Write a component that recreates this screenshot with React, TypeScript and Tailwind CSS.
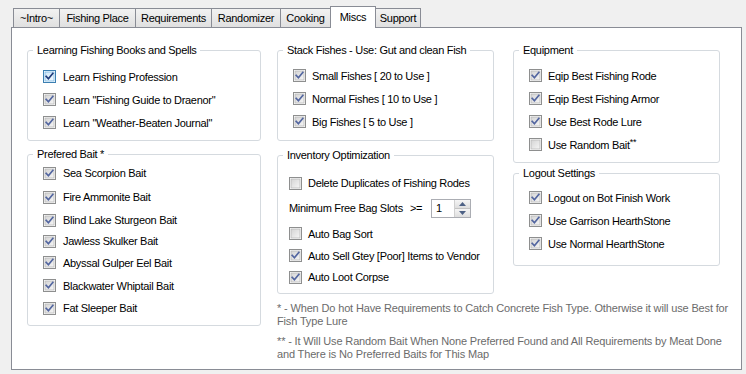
import React from "react";

const tabs = [
  { name: "~Intro~", w: "w-[47px]" },
  { name: "Fishing Place", w: "w-[77px]" },
  { name: "Requirements", w: "w-[77px]" },
  { name: "Randomizer", w: "w-[70px]" },
  { name: "Cooking", w: "w-[51px]" },
  { name: "Miscs", w: "w-[46px]", active: true },
  { name: "Support", w: "w-[46px]" },
];

function Check({ on = true, focus = false }: { on?: boolean; focus?: boolean }) {
  return (
    <svg width="13" height="13" viewBox="0 0 13 13" className="shrink-0">
      <defs>
        <linearGradient id="cbg" x1="0" y1="0" x2="1" y2="1">
          <stop offset="0" stopColor="#d4d4d4" />
          <stop offset="1" stopColor="#f6f6f6" />
        </linearGradient>
        <linearGradient id="cbf" x1="0" y1="0" x2="1" y2="1">
          <stop offset="0" stopColor="#cfe6f7" />
          <stop offset="1" stopColor="#f2f9fe" />
        </linearGradient>
      </defs>
      <rect x="0.5" y="0.5" width="12" height="12" fill="#fff" stroke={focus ? "#3c7fb1" : "#8e8f8f"} />
      <rect x="2" y="2" width="9" height="9" fill={focus ? "url(#cbf)" : "url(#cbg)"} stroke={focus ? "#79b7e3" : "#b9b9b9"} strokeWidth="0.8" />
      {on && (
        <path d="M3.2 6.4 L5.4 8.8 L9.8 3.4" fill="none" stroke={focus ? "#1f3a7a" : "#5366a0"} strokeWidth="1.7" strokeLinecap="square" strokeLinejoin="miter" />
      )}
    </svg>
  );
}

function Row({ label, on = true, focus = false, h = "h-[23px]", pl = "pl-[15px]", gap = "gap-[6px]" }: { label: React.ReactNode; on?: boolean; focus?: boolean; h?: string; pl?: string; gap?: string }) {
  return (
    <div className={`flex items-center ${h} ${pl} ${gap}`}>
      <Check on={on} focus={focus} />
      <span className="leading-[14px] whitespace-nowrap">{label}</span>
    </div>
  );
}

function Group({ title, className, children }: { title: string; className: string; children: React.ReactNode }) {
  return (
    <fieldset className={`border border-[#d5dadf] rounded-[3px] ${className}`}>
      <legend className="ml-[5px] px-[4px] leading-[14px] text-black">{title}</legend>
      {children}
    </fieldset>
  );
}

function Spinner() {
  return (
    <div className="flex w-[40px] h-[19px] border border-[#abadb3] bg-white">
      <div className="flex-1 pl-[4px] leading-[17px]">1</div>
      <div className="w-[16px] flex flex-col border-l border-[#d0d0d0]">
        <div className="flex-1 flex items-center justify-center bg-gradient-to-b from-[#f5f5f5] to-[#dedede] border-b border-[#c4c4c4]">
          <svg width="7" height="4" viewBox="0 0 7 4"><path d="M0 4 L3.5 0 L7 4Z" fill="#4d6185" /></svg>
        </div>
        <div className="flex-1 flex items-center justify-center bg-gradient-to-b from-[#f5f5f5] to-[#dedede]">
          <svg width="7" height="4" viewBox="0 0 7 4"><path d="M0 0 L3.5 4 L7 0Z" fill="#4d6185" /></svg>
        </div>
      </div>
    </div>
  );
}

export default function App() {
  return (
    <div className="w-[746px] h-[374px] bg-[#f0f0f0] pt-[6px] pl-[11px] text-[11px] tracking-[-0.3px] text-black" style={{ fontFamily: '"Liberation Sans", Arial, sans-serif' }}>
      <div className="flex items-end h-[21px] pl-[2px]">
        {tabs.map((t) =>
          t.active ? (
            <div key={t.name} className={`${t.w} h-[22px] -mb-px -mr-px relative z-10 bg-white border-x border-t border-[#898c95] flex justify-center pt-[3px] leading-[14px]`}>
              {t.name}
            </div>
          ) : (
            <div key={t.name} className={`${t.w} h-[19px] -mr-px bg-gradient-to-b from-[#f2f2f2] to-[#e0e0e0] border-x border-t border-[#898c95] flex justify-center pt-[2px] leading-[14px]`}>
              {t.name}
            </div>
          )
        )}
      </div>
      <div className="w-[731px] h-[343px] bg-white border border-[#898c95] pt-[15px] pl-[15px] flex gap-[16px]">
        <div className="w-[234px] flex flex-col">
          <Group title="Learning Fishing Books and Spells" className="h-[98px] pt-[8px]">
            <Row label="Learn Fishing Profession" focus gap="gap-[7px]" />
            <Row label={'Learn "Fishing Guide to Draenor"'} gap="gap-[7px]" />
            <Row label={'Learn "Weather-Beaten Journal"'} gap="gap-[7px]" />
          </Group>
          <Group title="Prefered Bait *" className="h-[179px] mt-[6px]">
            <Row label="Sea Scorpion Bait" h="h-[24px]" gap="gap-[7px]" />
            <Row label="Fire Ammonite Bait" h="h-[24px]" gap="gap-[7px]" />
            <Row label="Blind Lake Sturgeon Bait" h="h-[22px]" gap="gap-[7px]" />
            <Row label="Jawless Skulker Bait" h="h-[20px]" gap="gap-[7px]" />
            <Row label="Abyssal Gulper Eel Bait" h="h-[23px]" gap="gap-[7px]" />
            <Row label="Blackwater Whiptail Bait" h="h-[23px]" gap="gap-[7px]" />
            <Row label="Fat Sleeper Bait" h="h-[22px]" gap="gap-[7px]" />
          </Group>
        </div>
        <div className="flex flex-col">
          <div className="flex items-start gap-[19px]">
            <div className="w-[217px] flex flex-col">
              <Group title="Stack Fishes - Use: Gut and clean Fish" className="h-[98px] pt-[7px]">
                <Row label="Small Fishes [ 20 to Use ]" />
                <Row label="Normal Fishes [ 10 to Use ]" />
                <Row label="Big Fishes [ 5 to Use ]" />
              </Group>
              <Group title="Inventory Optimization" className="h-[146px] mt-[7px] pt-[10px]">
                <Row label="Delete Duplicates of Fishing Rodes" on={false} h="h-[22px]" pl="pl-[11px]" />
                <div className="flex items-center h-[28px] pl-[11px]">
                  <span className="w-[121px] whitespace-nowrap">Minimum Free Bag Slots</span>
                  <span className="w-[21px]">&gt;=</span>
                  <Spinner />
                </div>
                <Row label="Auto Bag Sort" on={false} h="h-[23px]" pl="pl-[11px]" />
                <Row label="Auto Sell Gtey [Poor] Items to Vendor" h="h-[21px]" pl="pl-[11px]" />
                <Row label="Auto Loot Corpse" h="h-[22px]" pl="pl-[11px]" />
              </Group>
            </div>
            <div className="w-[207px] flex flex-col">
              <Group title="Equipment" className="h-[120px] pt-[7px]">
                <Row label="Eqip Best Fishing Rode" />
                <Row label="Eqip Best Fishing Armor" />
                <Row label="Use Best Rode Lure" />
                <Row label={<>Use Random Bait<span className="text-[9px] align-top leading-[9px]">**</span></>} on={false} />
              </Group>
              <Group title="Logout Settings" className="h-[100px] mt-[3px] pt-[6px]">
                <Row label="Logout on Bot Finish Work" />
                <Row label="Use Garrison HearthStone" />
                <Row label="Use Normal HearthStone" />
              </Group>
            </div>
          </div>
          <div className="mt-[8px] text-[#6b6b6b] leading-[13px] tracking-[-0.15px] whitespace-nowrap">
            <p>
              * - When Do hot Have Requirements to Catch Concrete Fish Type. Otherwise it will use Best for
              <br />
              Fish Type Lure
            </p>
            <p className="mt-[7px]">
              ** - It Will Use Random Bait When None Preferred Found and All Requirements by Meat Done
              <br />
              and There is No Preferred Baits for This Map
            </p>
          </div>
        </div>
      </div>
    </div>
  );
}
